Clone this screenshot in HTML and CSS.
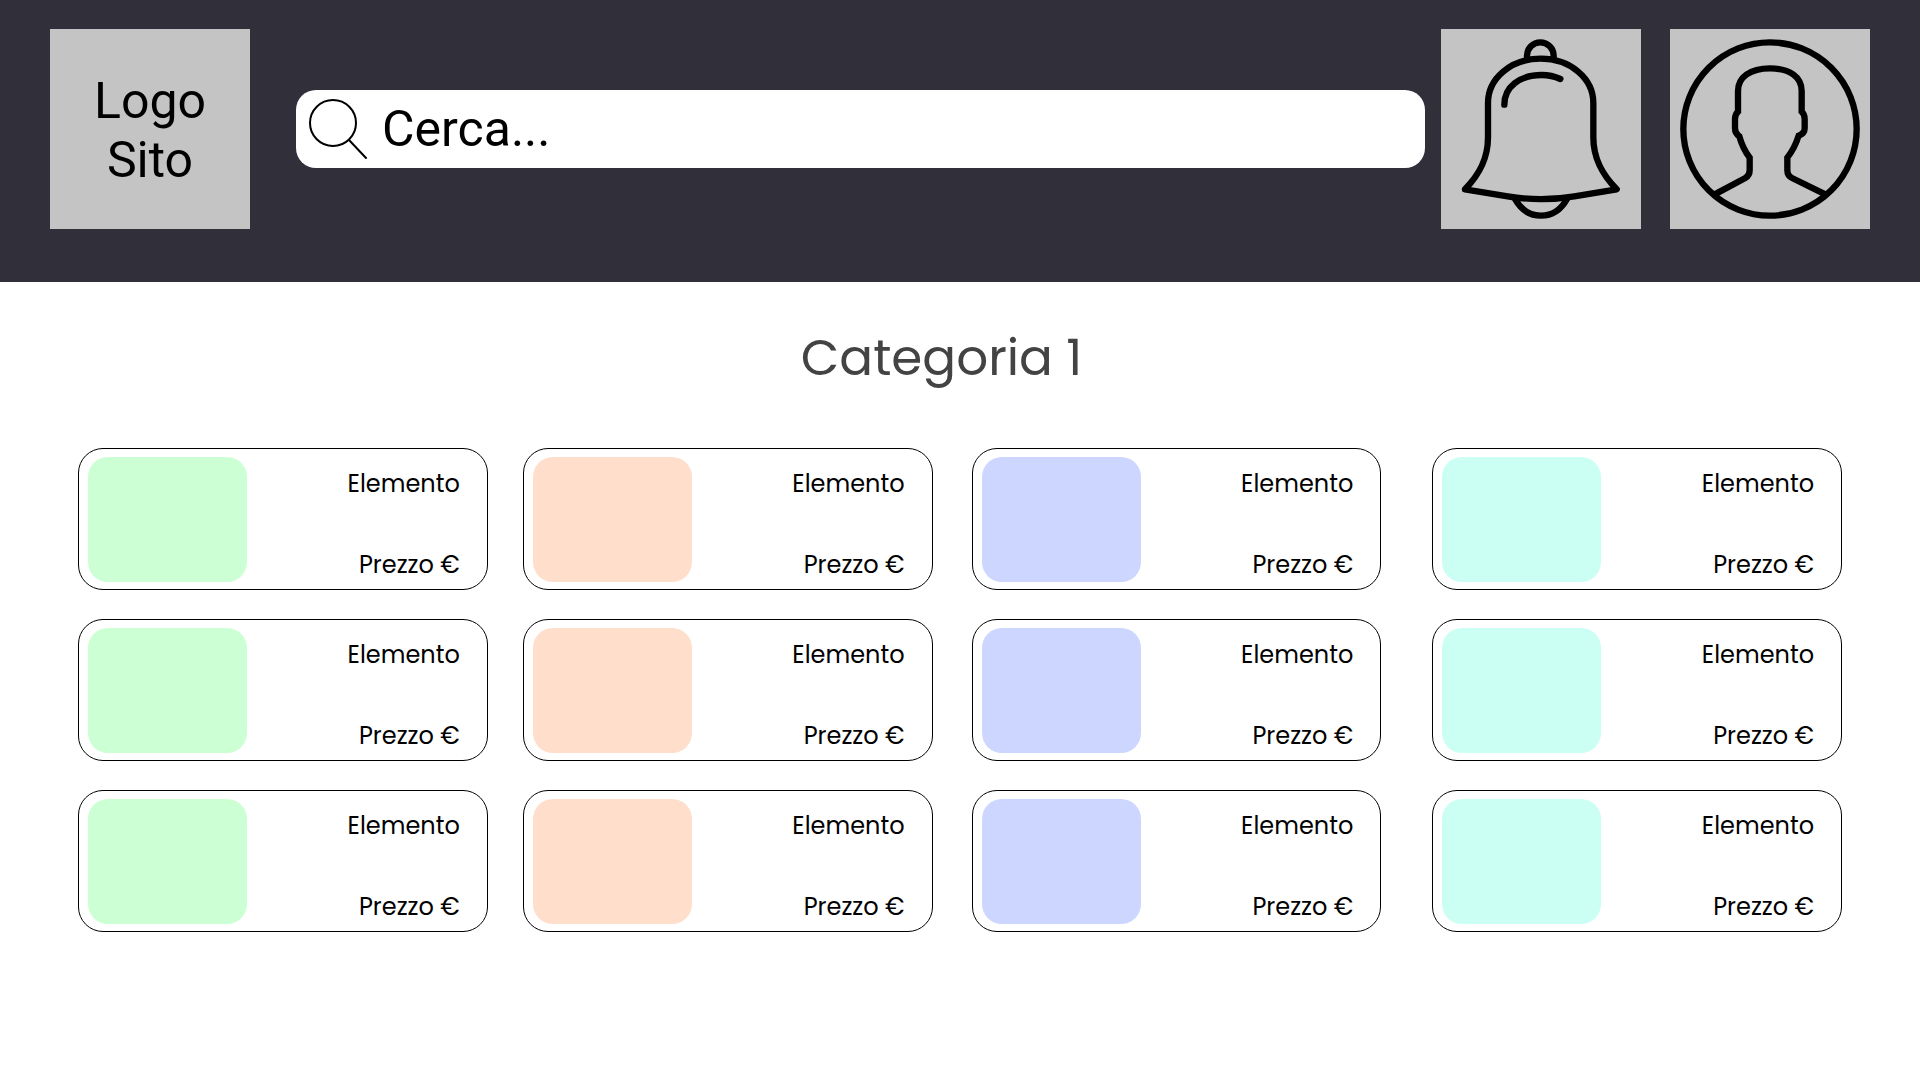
FILE: index.html
```html
<!DOCTYPE html>
<html lang="it">
<head>
  <meta charset="utf-8">
  <meta name="viewport" content="width=device-width, initial-scale=1">
  <title>Categoria 1</title>
  <link rel="stylesheet" href="styles.css">
</head>
<body>
  <header class="header">
    <a class="tile logo" href="#">Logo Sito</a>
    <form class="search" role="search">
      <label class="search-label" for="search-input" aria-label="Cerca">
        <svg class="search-icon" viewBox="0 0 58 62" aria-hidden="true">
          <circle cx="25" cy="25" r="23"/>
          <path d="M41 42L58 60"/>
        </svg>
      </label>
      <input class="search-input" id="search-input" type="text" placeholder="Cerca...">
    </form>
    <div class="actions">
      <button class="tile" type="button" aria-label="Notifiche">
        <svg class="icon" viewBox="0 0 600 600" aria-hidden="true">
          <path d="M258 86V80A40 40 0 0 1 338 80V86"/>
          <path d="M141 222C141 148 210 89 299 89S457 148 457 222V325C457 390 484 437 527 481L400 502Q300 519 200 502L72 481C115 437 141 390 141 325Z"/>
          <path d="M190 227C190 175 235 138 302 138Q332 138 358 150"/>
          <path d="M222 510Q250 560 300 560Q350 560 378 510"/>
        </svg>
      </button>
      <button class="tile" type="button" aria-label="Profilo">
        <svg class="icon icon-profile" viewBox="0 0 600 600" aria-hidden="true">
          <circle cx="300" cy="300" r="260"/>
          <path d="M134 496L226 447Q239 440 239 424V386Q218 358 208 322Q195 314 195 298V270Q195 256 204 248V186C204 145 240 118 300 118S395 145 395 186V248Q404 256 404 270V298Q404 314 386 320Q374 358 352 386V424Q352 440 366 447L466 496"/>
        </svg>
      </button>
    </div>
  </header>

  <main class="main">
    <h1 class="title">Categoria 1</h1>
    <div class="columns">
      <section class="column column-green">
        <article class="card"><div class="thumb"></div><div class="info"><span>Elemento</span><span>Prezzo €</span></div></article>
        <article class="card"><div class="thumb"></div><div class="info"><span>Elemento</span><span>Prezzo €</span></div></article>
        <article class="card"><div class="thumb"></div><div class="info"><span>Elemento</span><span>Prezzo €</span></div></article>
      </section>
      <section class="column column-peach">
        <article class="card"><div class="thumb"></div><div class="info"><span>Elemento</span><span>Prezzo €</span></div></article>
        <article class="card"><div class="thumb"></div><div class="info"><span>Elemento</span><span>Prezzo €</span></div></article>
        <article class="card"><div class="thumb"></div><div class="info"><span>Elemento</span><span>Prezzo €</span></div></article>
      </section>
      <section class="column column-blue">
        <article class="card"><div class="thumb"></div><div class="info"><span>Elemento</span><span>Prezzo €</span></div></article>
        <article class="card"><div class="thumb"></div><div class="info"><span>Elemento</span><span>Prezzo €</span></div></article>
        <article class="card"><div class="thumb"></div><div class="info"><span>Elemento</span><span>Prezzo €</span></div></article>
      </section>
      <section class="column column-aqua">
        <article class="card"><div class="thumb"></div><div class="info"><span>Elemento</span><span>Prezzo €</span></div></article>
        <article class="card"><div class="thumb"></div><div class="info"><span>Elemento</span><span>Prezzo €</span></div></article>
        <article class="card"><div class="thumb"></div><div class="info"><span>Elemento</span><span>Prezzo €</span></div></article>
      </section>
    </div>
  </main>
</body>
</html>
```

FILE: styles.css
```css
* {
  box-sizing: border-box;
}

body {
  margin: 0;
  background: #fff;
  color: #000;
  font-family: Poppins, Inter, "Open Sans", sans-serif;
}

/* Header */
.header {
  display: flex;
  align-items: center;
  padding: 29px 50px 53px;
  background: #302f3a;
}

.tile {
  display: flex;
  align-items: center;
  justify-content: center;
  flex: none;
  width: 200px;
  height: 200px;
  padding: 0;
  border: 0;
  background: #c4c4c4;
  color: #000;
  cursor: pointer;
}

.logo {
  padding: 4px 40px 0;
  font: 50px/59px Roboto, sans-serif;
  text-align: center;
  text-decoration: none;
}

.search {
  display: flex;
  align-items: center;
  flex: 1;
  gap: 16px;
  min-width: 0;
  height: 78px;
  margin: 0 16px 0 46px;
  padding: 0 12px;
  border-radius: 20px;
  background: #fff;
}

.search-label {
  display: flex;
  flex: none;
}

.search-icon {
  width: 58px;
  height: 62px;
  overflow: visible;
  fill: none;
  stroke: #000;
  stroke-width: 2;
  stroke-linecap: round;
}

.search-input {
  flex: 1;
  min-width: 0;
  padding: 0;
  border: 0;
  outline: 0;
  background: transparent;
  color: #000;
  font: 50px/59px Roboto, sans-serif;
}

.search-input::placeholder {
  color: #000;
  opacity: 1;
}

.actions {
  display: flex;
  gap: 29px;
}

.icon {
  width: 100%;
  height: 100%;
  fill: none;
  stroke: #000;
  stroke-width: 19;
  stroke-linecap: round;
  stroke-linejoin: round;
}

.icon-profile {
  stroke-linecap: butt;
  stroke-linejoin: miter;
}

/* Category */
.main {
  padding: 46px 78px 60px;
}

.title {
  margin: 0 0 60px;
  padding-right: 37px;
  color: #434343;
  font-size: 50px;
  font-weight: 400;
  line-height: 60px;
  text-align: center;
}

.columns {
  display: flex;
}

.column {
  display: flex;
  flex: 1;
  flex-direction: column;
  gap: 29px;
  min-width: 0;
}

.card {
  display: flex;
  justify-content: space-between;
  padding: 8px 27px 7px 9px;
  border: 1px solid #000;
  border-radius: 25px;
}

.thumb {
  width: 159px;
  height: 125px;
  border-radius: 20px;
}

.info {
  display: flex;
  flex-direction: column;
  justify-content: space-between;
  padding: 12px 0 2px;
  font-size: 24px;
  line-height: 30px;
  text-align: right;
}

.column-green .thumb {
  background: #ccffd3;
}

.column-peach {
  margin-left: 35px;
}

.column-peach .thumb {
  background: #ffdecc;
}

.column-blue {
  margin-left: 39px;
}

.column-blue .thumb {
  background: #ccd6ff;
}

.column-aqua {
  margin-left: 51px;
}

.column-aqua .thumb {
  background: #ccfff3;
}
```
